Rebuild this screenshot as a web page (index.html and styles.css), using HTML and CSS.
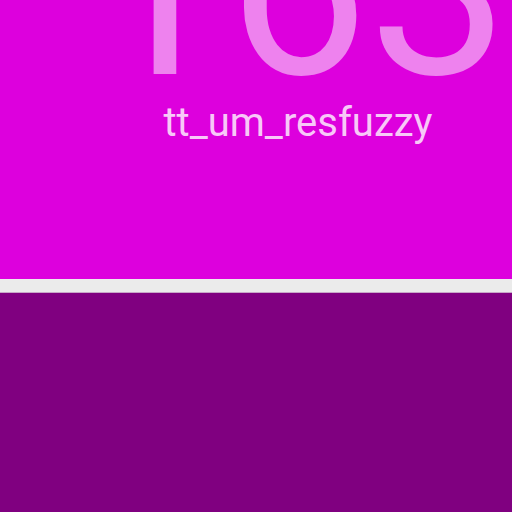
FILE: index.html
```html
<!DOCTYPE html>
<html>
<head>
<meta charset="utf-8">
<link rel="stylesheet" href="styles.css">
</head>
<body>
<div class="top">
  <div class="title">
    <div class="big">163</div>
    <div class="sub">tt_um_resfuzzy</div>
  </div>
</div>
<div class="divider"></div>
<div class="bottom"></div>
</body>
</html>
```
FILE: styles.css
```css
html, body {
  margin: 0;
  padding: 0;
  width: 512px;
  height: 512px;
  overflow: hidden;
  font-family: Roboto, "Liberation Sans", sans-serif;
}
.top {
  height: 279px;
  background: #dd00dd;
  display: flex;
  justify-content: center;
  padding-left: 84px;
  box-sizing: border-box;
  overflow: hidden;
}
.title {
  display: flex;
  flex-direction: column;
  align-items: center;
  margin-top: -111px;
}
.big {
  font-size: 250px;
  line-height: 200px;
  color: #ee82ee;
  height: 200px;
  margin-bottom: 14px;
}
.sub {
  font-size: 40px;
  color: #f8c8f8;
  line-height: 1;
}
.divider {
  height: 13px;
  background: #ebebeb;
  border-bottom: 1px solid #c8a8c8;
}
.bottom {
  height: 219px;
  background: #800080;
}
```
